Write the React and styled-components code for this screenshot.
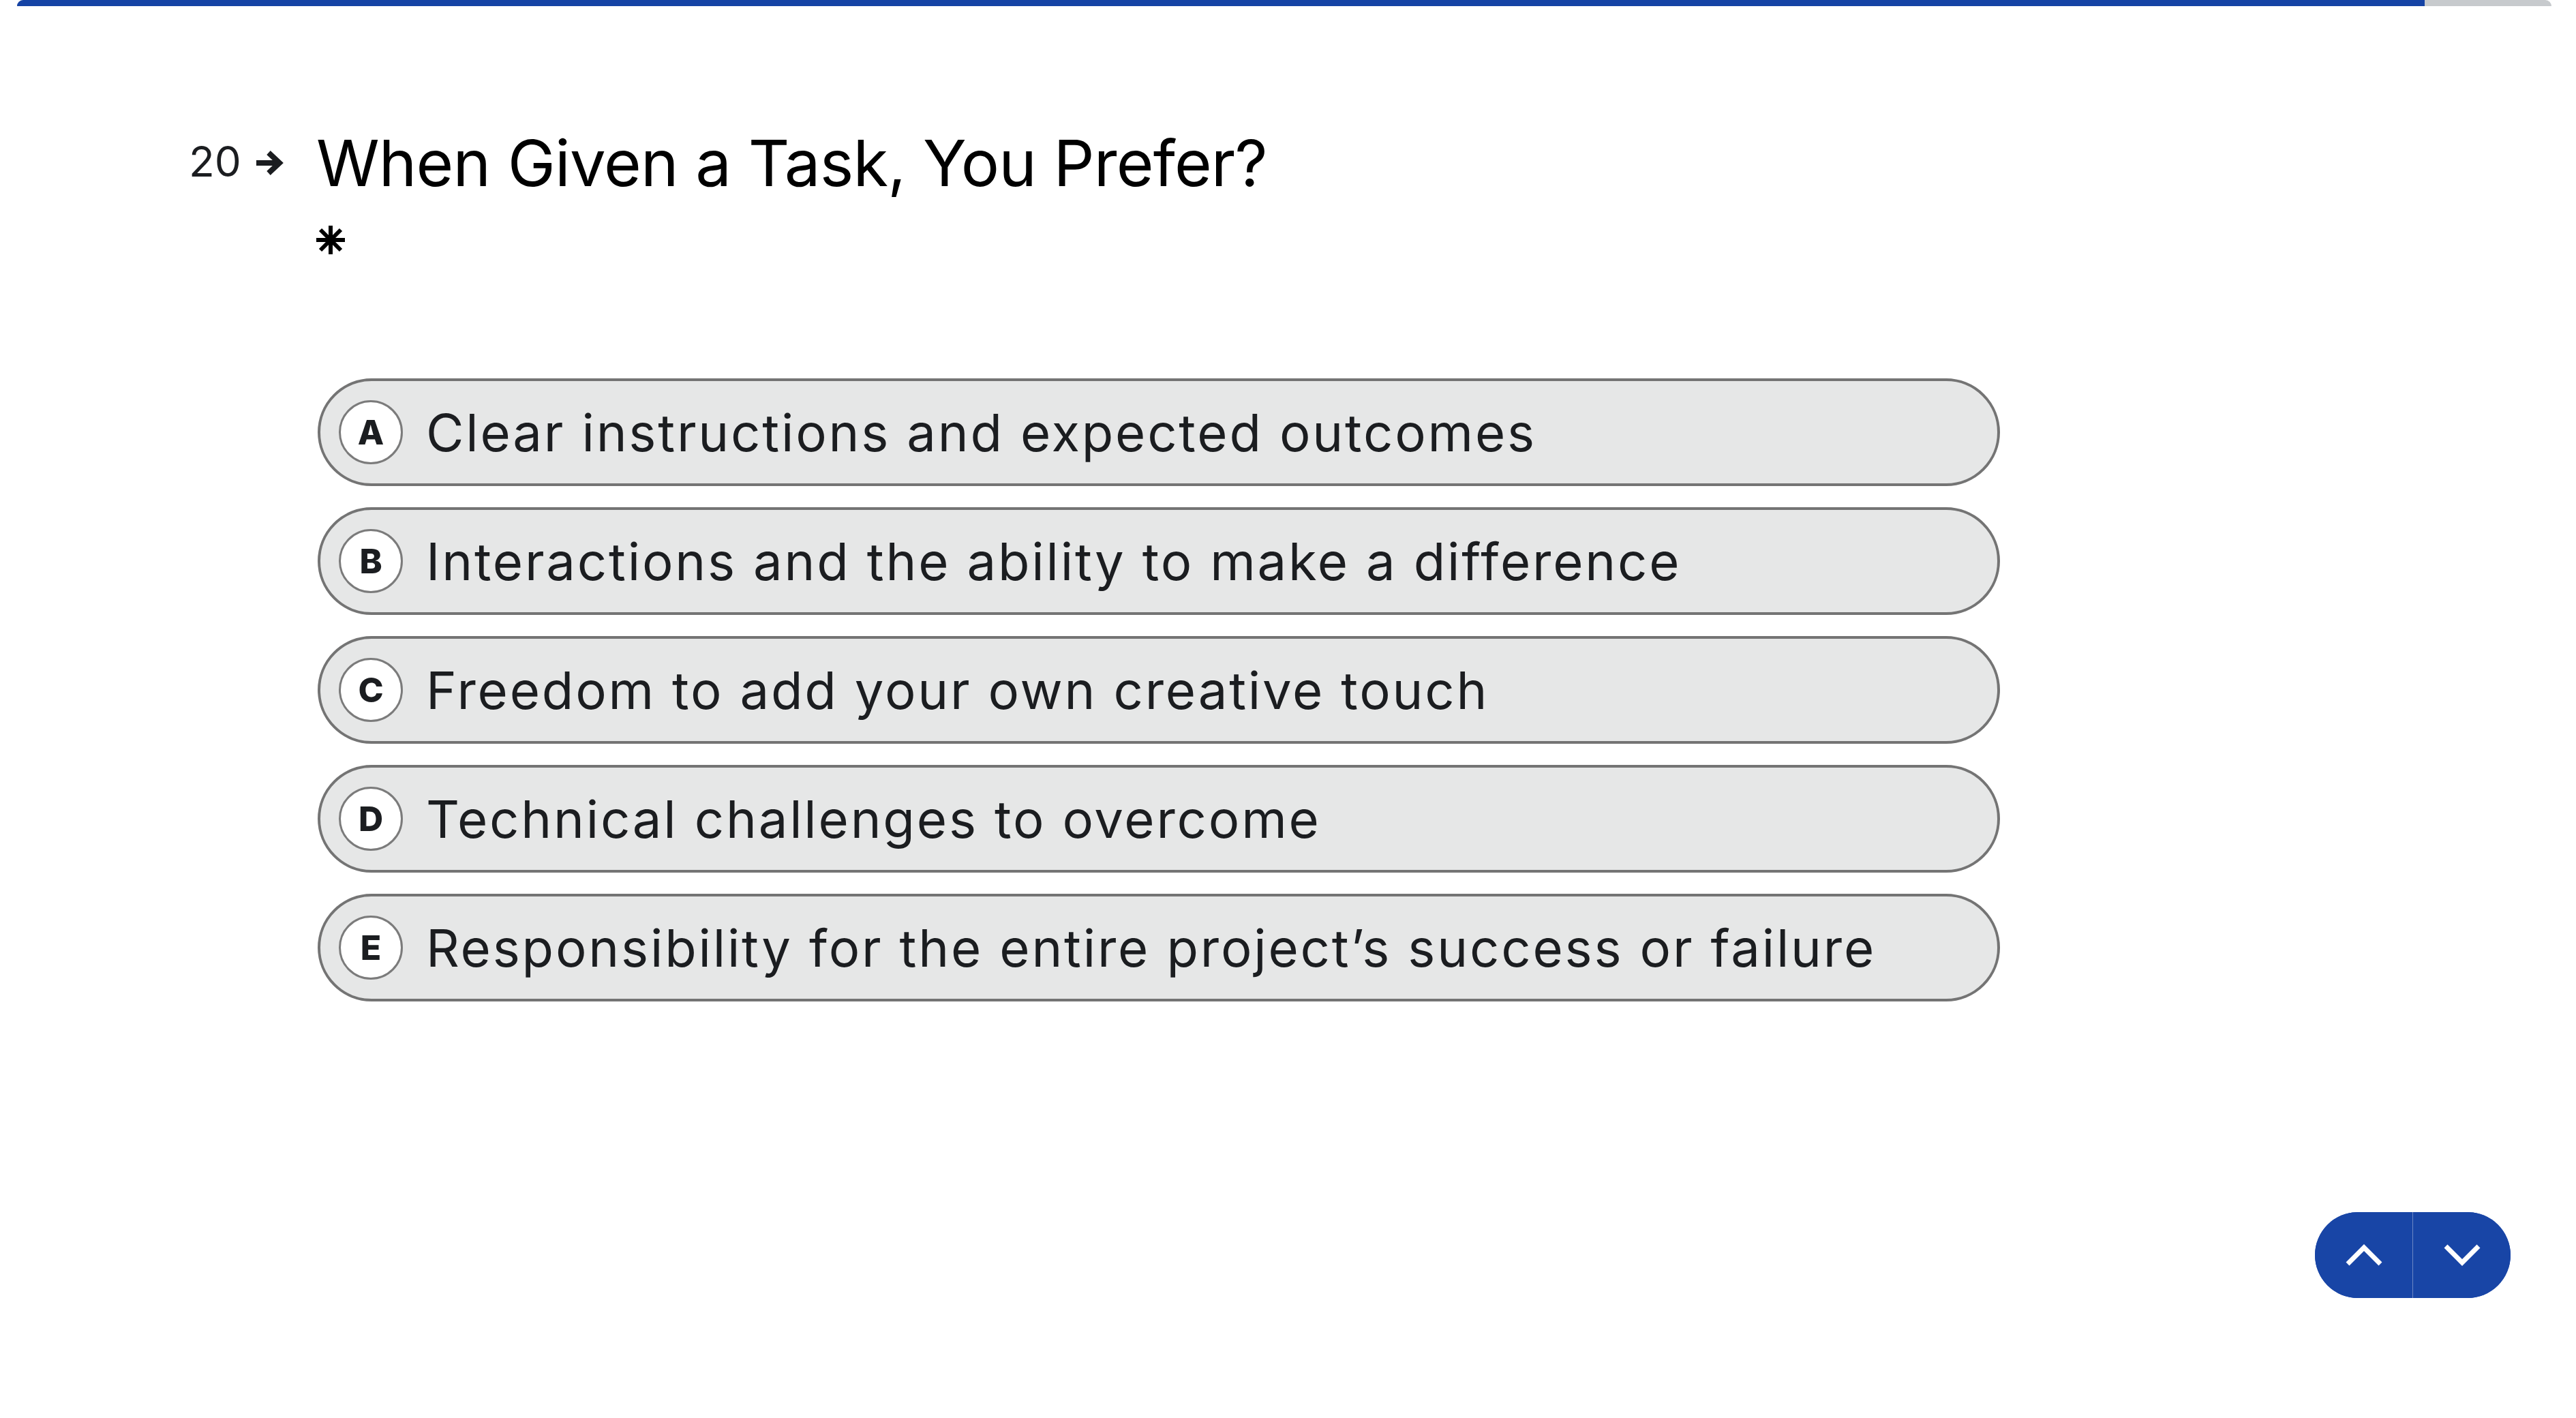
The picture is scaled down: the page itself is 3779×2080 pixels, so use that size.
import React from 'react'
import styled, { createGlobalStyle } from 'styled-components'

const GlobalStyle = createGlobalStyle`
    html, body {
        margin: 0;
        padding: 0;
        background: #ffffff;
    }
    body {
        font-family: Inter, "Noto Sans", "Liberation Sans", sans-serif;
        color: #000000;
    }
`

const choices = [
    { key: 'A', label: 'Clear instructions and expected outcomes' },
    { key: 'B', label: 'Interactions and the ability to make a difference' },
    { key: 'C', label: 'Freedom to add your own creative touch' },
    { key: 'D', label: 'Technical challenges to overcome' },
    { key: 'E', label: 'Responsibility for the entire project’s success or failure' },
]

const progress = 95

export default function App() {
    return (
        <Page>
            <GlobalStyle />
            <ProgressTrack>
                <ProgressFill style={{ width: `${progress}%` }} />
            </ProgressTrack>

            <Main>
                <Question>
                    <Counter>
                        20
                        <svg width="42" height="38" viewBox="0 0 42 38" aria-hidden="true">
                            <path d="M2 19 H36" stroke="#1b1d20" strokeWidth="8" />
                            <path d="M20 4 L36 19 L20 34" stroke="#1b1d20" strokeWidth="8" fill="none" />
                        </svg>
                    </Counter>
                    <Body>
                        <Title>When Given a Task, You Prefer?</Title>
                        <Required aria-label="required">
                            <svg width="42" height="42" viewBox="0 0 42 42">
                                <g stroke="#000" strokeWidth="6">
                                    <path d="M21 0 V42" />
                                    <path d="M0 21 H42" />
                                    <path d="M6 6 L36 36" />
                                    <path d="M36 6 L6 36" />
                                </g>
                            </svg>
                        </Required>
                        <ChoiceList>
                            {choices.map(c => (
                                <Choice key={c.key}>
                                    <KeyBadge>{c.key}</KeyBadge>
                                    <ChoiceText>{c.label}</ChoiceText>
                                </Choice>
                            ))}
                        </ChoiceList>
                    </Body>
                </Question>
            </Main>

            <Footer>
                <NavGroup>
                    <NavButton aria-label="previous">
                        <svg width="56" height="34" viewBox="0 0 56 34">
                            <path d="M4 30 L28 6 L52 30" stroke="#fff" strokeWidth="7" fill="none" />
                        </svg>
                    </NavButton>
                    <NavButton aria-label="next">
                        <svg width="56" height="34" viewBox="0 0 56 34">
                            <path d="M4 4 L28 28 L52 4" stroke="#fff" strokeWidth="7" fill="none" />
                        </svg>
                    </NavButton>
                </NavGroup>
            </Footer>
        </Page>
    )
}

const Page = styled.div`
    height: 100vh;
    display: flex;
    flex-direction: column;
    overflow: hidden;
`

const ProgressTrack = styled.div`
    margin: 0 36px 0 25px;
    height: 9px;
    background: #c7cacd;
    border-radius: 10px 10px 0 0;
    overflow: hidden;
    display: flex;
`

const ProgressFill = styled.div`
    background: #1543a5;
    height: 100%;
`

const Main = styled.main`
    flex: 1;
    padding: 169px 0 0 277px;
`

const Question = styled.section`
    display: flex;
    align-items: flex-start;
`

const Counter = styled.div`
    width: 187px;
    flex-shrink: 0;
    padding-top: 19px;
    display: flex;
    align-items: center;
    gap: 20px;
    font-size: 62px;
    line-height: 80px;
    color: #1b1d20;

    svg {
        margin-top: 4px;
    }
`

const Body = styled.div`
    display: flex;
    flex-direction: column;
`

const Title = styled.h1`
    margin: 0;
    font-size: 94px;
    line-height: 122px;
    font-weight: 400;
    color: #000000;
    letter-spacing: -0.85px;
`

const Required = styled.div`
    margin: 31px 0 0 0;
    height: 42px;
    line-height: 0;
`

const ChoiceList = styled.div`
    margin: 182px 0 0 2px;
    display: flex;
    flex-direction: column;
    gap: 31px;
    width: 2468px;
`

const Choice = styled.div`
    box-sizing: border-box;
    height: 158px;
    border: 4px solid #747474;
    border-radius: 80px;
    background: #e6e7e7;
    display: flex;
    align-items: center;
    padding-left: 27px;
    gap: 34px;
`

const KeyBadge = styled.span`
    box-sizing: border-box;
    width: 94px;
    height: 94px;
    border-radius: 50%;
    border: 3px solid #7b7b7b;
    background: #ffffff;
    display: flex;
    align-items: center;
    justify-content: center;
    font-size: 50px;
    font-weight: 800;
    color: #1b1d20;
`

const ChoiceText = styled.span`
    font-size: 76px;
    letter-spacing: 2.8px;
    color: #1b1d20;
    white-space: nowrap;
`

const Footer = styled.footer`
    display: flex;
    justify-content: flex-end;
    padding: 0 96px 176px 0;
`

const NavGroup = styled.div`
    display: flex;
    height: 126px;
    border-radius: 63px;
    overflow: hidden;
    background: #1845a6;
`

const NavButton = styled.button`
    width: 143px;
    height: 126px;
    border: none;
    padding: 0;
    background: #1845a6;
    display: flex;
    align-items: center;
    justify-content: center;
    cursor: pointer;

    & + & {
        border-left: 1px solid #6b86c4;
        width: 144px;
    }
`
